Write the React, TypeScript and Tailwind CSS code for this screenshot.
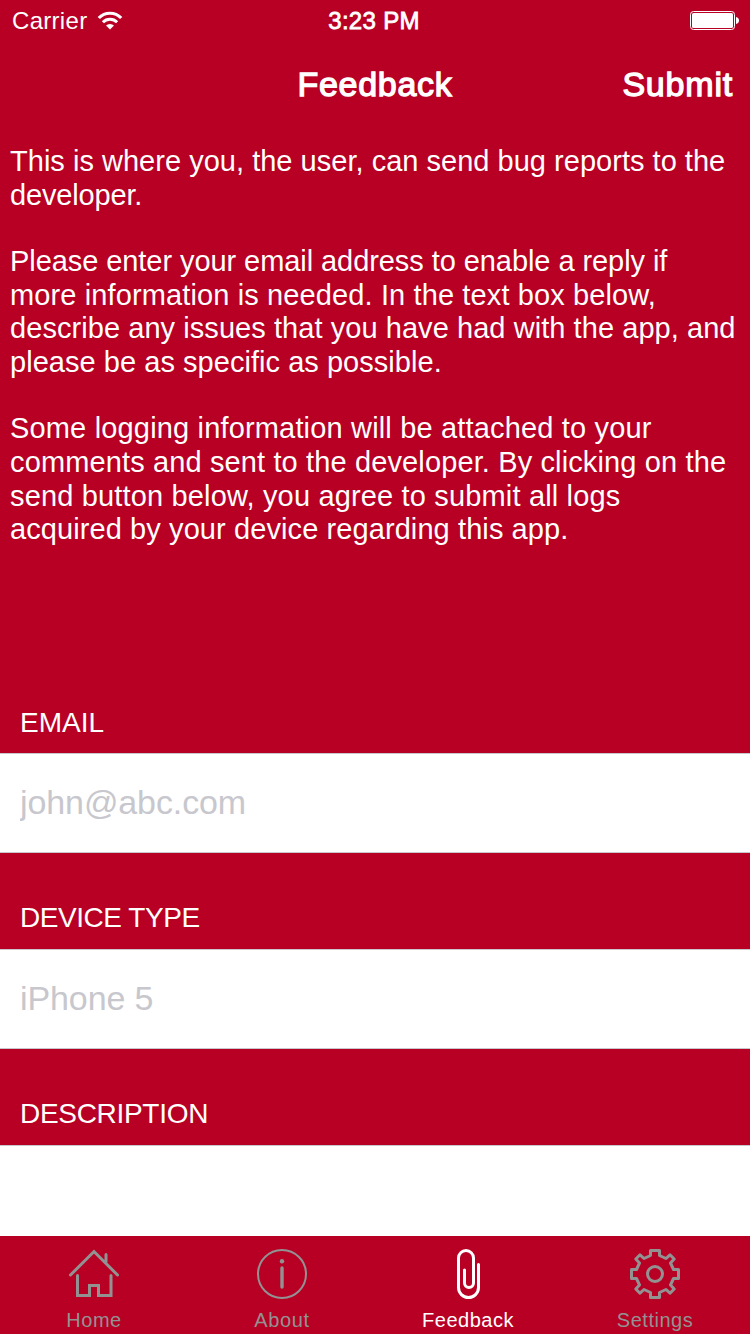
import React from "react";

type Line = { text: string; cls: string };

const intro: Line[] = [
  { text: "This is where you, the user, can send bug reports to the", cls: "h-[33.6px] tracking-[0.02px]" },
  { text: "developer.", cls: "h-[33.6px] tracking-[-0.16px]" },
  { text: "", cls: "h-[32.8px]" },
  { text: "Please enter your email address to enable a reply if", cls: "h-[33.6px] tracking-[-0.07px]" },
  { text: "more information is needed. In the text box below,", cls: "h-[33.6px] tracking-[0.12px]" },
  { text: "describe any issues that you have had with the app, and", cls: "h-[33.6px] tracking-[0.06px]" },
  { text: "please be as specific as possible.", cls: "h-[33.6px] tracking-[0.04px]" },
  { text: "", cls: "h-[32.8px]" },
  { text: "Some logging information will be attached to your", cls: "h-[33.6px] tracking-[0.165px]" },
  { text: "comments and sent to the developer. By clicking on the", cls: "h-[33.6px] tracking-[0.127px]" },
  { text: "send button below, you agree to submit all logs", cls: "h-[33.6px] tracking-[0.16px]" },
  { text: "acquired by your device regarding this app.", cls: "h-[33.6px] tracking-[0.09px]" },
];

function Wifi() {
  return (
    <svg className="mt-[2px]" width="26" height="20" viewBox="0 0 26 20" fill="none" stroke="white">
      <path d="M1.8 7A15.6 15.6 0 0 1 24.2 7" strokeWidth="3.2" />
      <path d="M5.9 11.2A10 10 0 0 1 20.1 11.2" strokeWidth="3" />
      <path d="M9 14.6A5.8 5.8 0 0 1 17 14.6L13 18.6Z" fill="white" stroke="none" />
    </svg>
  );
}

function Battery() {
  return (
    <svg className="mt-[2px]" width="50" height="20" viewBox="0 0 50 20">
      <rect x="0.5" y="0.5" width="44" height="18" rx="3" fill="none" stroke="white" />
      <rect x="2" y="2" width="41" height="15" rx="1.5" fill="white" />
      <path d="M46 6c2 .5 3 1.800 3 3.500s-1 3-3 3.500z" fill="white" />
    </svg>
  );
}

const iconProps = {
  width: 50,
  height: 50,
  viewBox: "0 0 50 50",
  fill: "none",
  stroke: "currentColor",
  strokeWidth: 3,
  strokeLinecap: "round" as const,
  strokeLinejoin: "round" as const,
};

function Home() {
  return (
    <svg {...iconProps}>
      <path d="M1.500 26L25 2.500L48.500 26M37 5.500V13M8.500 26.500V46.500H20.500V36.500H29.500V46.500H42V26.500" strokeLinejoin="miter" />
    </svg>
  );
}

function Info() {
  return (
    <svg {...iconProps}>
      <circle cx="25" cy="25" r="24" strokeWidth="2" />
      <circle cx="25" cy="12.300" r="2.200" fill="currentColor" stroke="none" />
      <path d="M25 19V38" strokeWidth="3.400" />
    </svg>
  );
}

function Clip() {
  return (
    <svg {...iconProps}>
      <path d="M21.500 21V34A4.500 4.500 0 0 0 30.500 34V9A7.500 7.500 0 0 0 15.500 9V38.500A10 10 0 0 0 35.500 38.500V15.500" />
    </svg>
  );
}

function Gear() {
  return (
    <svg {...iconProps}>
      <path d="M20.500 1.500H29.500V6.500L36 9.500L40 5.800L44.200 10L40.500 14L43.500 20.500H48.500V29.500H43.500L40.500 36L44.200 40L40 44.200L36 40.500L29.500 43.500V48.500H20.500V43.500L14 40.500L10 44.200L5.800 40L9.500 36L6.500 29.500H1.500V20.500H6.500L9.500 14L5.800 10L10 5.800L14 9.500L20.500 6.500Z" />
      <circle cx="25" cy="25" r="7.500" />
    </svg>
  );
}

const tabs = [
  { label: "Home", Icon: Home, cls: "tracking-[0.5px] text-[#929292]" },
  { label: "About", Icon: Info, cls: "tracking-[0.6px] text-[#929292]" },
  { label: "Feedback", Icon: Clip, cls: "tracking-[0.5px] text-white" },
  { label: "Settings", Icon: Gear, cls: "tracking-[0.5px] text-[#929292]" },
];

export default function App() {
  return (
    <div className="flex h-[1334px] w-[750px] flex-col overflow-hidden bg-[#b80024] font-['Liberation_Sans',Arial,sans-serif] text-white">
      <header className="grid h-10 shrink-0 grid-cols-3 items-center pl-3 pr-[10px] text-[24px] leading-[38px]">
        <div className="flex items-center gap-[10px]">
          <span className="pt-[2px] tracking-[0.3px]">Carrier</span>
          <Wifi />
        </div>
        <span className="pt-[2px] pr-1 text-center tracking-[0.3px] [-webkit-text-stroke:0.8px_white]">3:23 PM</span>
        <div className="flex justify-end">
          <Battery />
        </div>
      </header>
      <nav className="grid h-[88px] shrink-0 grid-cols-3 items-center pr-[17px] pl-[17px] text-[34px] leading-[88px] [-webkit-text-stroke:1.3px_white]">
        <span />
        <h1 className="text-center tracking-[0.7px]">Feedback</h1>
        <button className="text-right tracking-[0.8px]">Submit</button>
      </nav>
      <section className="h-[569px] shrink-0 pl-[10px] pt-[17.2px] text-[29px]">
        {intro.map((l, i) => (
          <p key={i} className={`leading-[33.6px] whitespace-nowrap ${l.cls}`}>
            {l.text}
          </p>
        ))}
      </section>
      <main className="flex h-[539px] shrink-0 flex-col">
        <label className="h-14 pl-5 pt-[10px] text-[28px] leading-[32px]">EMAIL</label>
        <input className="h-[100px] shrink-0 border-y border-[#c8c7cc] bg-white px-5 pb-[2px] text-[34px] tracking-[-0.1px] placeholder:text-[#c7c7cd]" placeholder="john@abc.com" />
        <label className="h-24 shrink-0 pl-5 pt-[49px] text-[28px] leading-[32px] tracking-[-0.45px]">DEVICE TYPE</label>
        <input className="h-[100px] shrink-0 border-y border-[#c8c7cc] bg-white px-5 pb-[2px] text-[34px] tracking-[-0.1px] placeholder:text-[#c7c7cd]" placeholder="iPhone 5" />
        <label className="h-24 shrink-0 pl-5 pt-[49px] text-[28px] leading-[32px] tracking-[-0.3px]">DESCRIPTION</label>
        <textarea className="min-h-0 flex-1 resize-none border-t border-[#c8c7cc] bg-white" />
      </main>
      <footer className="grid h-[98px] shrink-0 grid-cols-[188px_188px_184px_190px] text-[20px]">
        {tabs.map(({ label, Icon, cls }) => (
          <button key={label} className={`flex flex-col items-center pt-[13px] ${cls}`}>
            <Icon />
            <span className="mt-[9px] leading-[24px]">{label}</span>
          </button>
        ))}
      </footer>
    </div>
  );
}
